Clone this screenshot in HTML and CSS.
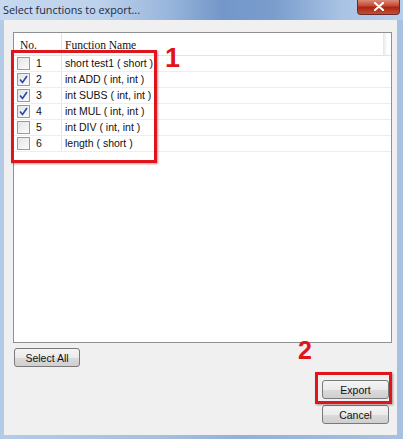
FILE: index.html
```html
<!DOCTYPE html>
<html lang="en">
<head>
    <meta charset="UTF-8">
    <title>Select functions to export...</title>
    <link rel="stylesheet" href="styles.css">
</head>
<body>
    <div class="window">
        <div class="titlebar">
            <span class="title">Select functions to export...</span>
            <button class="close-btn">
                <svg width="12" height="9" viewBox="0 0 12 9">
                    <path d="M2 1 L10 8 M10 1 L2 8" stroke="#fff" stroke-width="2.2" stroke-linecap="round"/>
                </svg>
            </button>
        </div>
        <div class="content">
            <div class="list">
                <div class="list-head">
                    <div class="col-no">No.</div>
                    <div class="col-name">Function Name</div>
                </div>
                <div id="rows"></div>
                <div class="mark mark-list"></div>
                <div class="badge badge-1">1</div>
            </div>
            <div class="bottom">
                <button class="btn btn-select">Select All</button>
                <div class="side-buttons">
                    <button class="btn">Export</button>
                    <button class="btn">Cancel</button>
                    <div class="mark mark-export"></div>
                    <div class="badge badge-2">2</div>
                </div>
            </div>
        </div>
    </div>

    <script>
        const functions = [
            { name: "short test1 ( short )", checked: false },
            { name: "int ADD ( int, int )", checked: true },
            { name: "int SUBS ( int, int )", checked: true },
            { name: "int MUL ( int, int )", checked: true },
            { name: "int DIV ( int, int )", checked: false },
            { name: "length ( short )", checked: false }
        ];

        const check = '<svg width="9" height="9" viewBox="0 0 9 9"><path d="M1 4.5 L3.5 7.5 L8 1" fill="none" stroke="#2a46a8" stroke-width="1.6"/></svg>';

        const rows = document.getElementById('rows');
        functions.forEach((fn, i) => {
            rows.innerHTML += `
                <div class="row">
                    <div class="col-no">
                        <span class="checkbox">${fn.checked ? check : ''}</span>
                        <span>${i + 1}</span>
                    </div>
                    <div class="col-name">${fn.name}</div>
                </div>
            `;
        });
    </script>
</body>
</html>
```

FILE: styles.css
```css
body {
    margin: 0;
    padding: 0;
    background-color: #a8c0de;
    font-family: "Liberation Sans", Arial, sans-serif;
}
.window {
    width: 403px;
    height: 439px;
    display: flex;
    flex-direction: column;
    background: linear-gradient(90deg, #b4cbe7 0%, #a6bfdf 40%, #93b0d8 60%, #a8c1e0 100%);
}
.titlebar {
    height: 20px;
    display: flex;
    justify-content: space-between;
    align-items: flex-start;
    padding: 0 3px 0 3px;
    background: linear-gradient(90deg, #c6d9ef 0%, #bcd1ec 25%, #98b5dc 42%, #7397c9 55%, #7a9dcd 68%, #a9c3e4 85%, #b8cfeb 100%);
}
.title {
    font-family: "Open Sans", sans-serif;
    font-size: 10.8px;
    line-height: 20px;
    color: #1c2a3a;
}
.close-btn {
    width: 43px;
    height: 16px;
    margin-top: -1px;
    padding: 0;
    border: 1px solid #6b2a2a;
    border-top: none;
    border-radius: 0 0 4px 4px;
    background: linear-gradient(#dc9582 0%, #c84a32 45%, #a92613 55%, #c24e35 100%);
    display: flex;
    align-items: center;
    justify-content: center;
}
.content {
    flex: 1;
    margin: 0 6px 4px 4px;
    padding: 12px 5px 0 9px;
    background-color: #f0f0f0;
    display: flex;
    flex-direction: column;
}
.list {
    position: relative;
    height: 309px;
    background: white;
    border: 1px solid #8d9196;
}
.list-head {
    display: flex;
    height: 22px;
    line-height: 24px;
    border-bottom: 1px solid #e3e3e3;
    font-family: "Liberation Serif", serif;
    font-size: 11.5px;
    color: #111;
    background: linear-gradient(90deg, #fff 98%, #e8e8e8 98%, #fff 99%);
}
.row {
    display: flex;
    height: 15px;
    line-height: 15px;
    border-bottom: 1px solid #ededed;
    font-size: 10.5px;
    color: #111;
}
.col-no {
    width: 44px;
    padding-left: 3px;
    display: flex;
    align-items: center;
    gap: 6px;
    border-right: 1px solid #e3e3e3;
}
.list-head .col-no {
    display: block;
    padding-left: 6px;
    width: 41px;
}
.col-name {
    padding-left: 3px;
    flex: 1;
}
.checkbox {
    width: 11px;
    height: 11px;
    border: 1px solid #9a9a9a;
    background: linear-gradient(135deg, #e4e4e4, #fbfbfb);
    display: flex;
    align-items: center;
    justify-content: center;
}
.bottom {
    display: flex;
    justify-content: space-between;
    align-items: flex-start;
    padding-top: 5px;
}
.btn {
    height: 19px;
    padding: 0;
    border: 1px solid #7a7a7a;
    border-radius: 3px;
    background: linear-gradient(#f4f4f4 0%, #ebebeb 50%, #dbdbdb 51%, #cfcfcf 100%);
    font-family: "Liberation Sans", Arial, sans-serif;
    font-size: 10.5px;
    color: #111;
}
.btn-select {
    width: 66px;
    margin-left: 1px;
}
.side-buttons {
    position: relative;
    display: flex;
    flex-direction: column;
    gap: 6px;
    margin-top: 32px;
    margin-right: 3px;
}
.side-buttons .btn {
    width: 67px;
}
/* red callouts drawn over the dialog */
.mark {
    position: absolute;
    border: 3px solid #e0141b;
    box-shadow: 1px 1px 2px rgba(80, 0, 0, 0.4);
}
.mark-list {
    left: -3px;
    top: 17px;
    width: 140px;
    height: 107px;
}
.mark-export {
    left: -7px;
    top: -8px;
    width: 71px;
    height: 26px;
}
.badge {
    position: absolute;
    font-family: "Liberation Sans", Arial, sans-serif;
    font-weight: bold;
    color: #e0141b;
}
.badge-1 {
    left: 151px;
    top: 10px;
    font-size: 27px;
}
.badge-2 {
    left: -24px;
    top: -44px;
    font-size: 25px;
}
```
